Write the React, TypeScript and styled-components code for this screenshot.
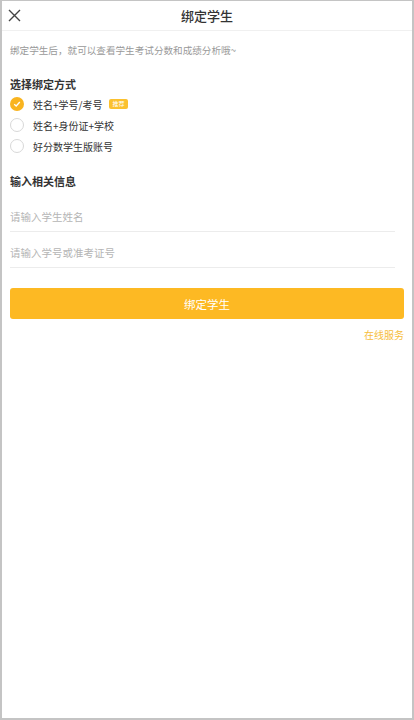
import { useState } from "react"
import styled, { createGlobalStyle } from "styled-components"

const GlobalStyle = createGlobalStyle`
  html, body {
    margin: 0;
    padding: 0;
    background: #fff;
  }
  body {
    font-family: "Noto Sans CJK SC", "Noto Sans", sans-serif;
    color: #333;
  }
`

const Frame = styled.div`
  box-sizing: border-box;
  width: 414px;
  height: 720px;
  border: 2px solid #c4c4c4;
  border-top-width: 1px;
  background: #fff;
  display: flex;
  flex-direction: column;
`

const Header = styled.div`
  height: 29px;
  display: grid;
  grid-template-columns: 40px 1fr 40px;
  align-items: center;
  border-bottom: 1px solid #f0f0f0;
`

const CloseButton = styled.button`
  border: 0;
  background: none;
  padding: 0 0 0 6px;
  height: 100%;
  display: flex;
  align-items: center;
  cursor: pointer;
`

const Title = styled.div`
  text-align: center;
  font-size: 13px;
  font-weight: 500;
  color: #333;
`

const Body = styled.div`
  padding: 0 8px;
  display: flex;
  flex-direction: column;
`

const Hint = styled.p`
  margin: 12px 0 0;
  font-size: 9.6px;
  line-height: 14px;
  color: #999;
`

const SectionTitle = styled.h2<{ $top: number }>`
  margin: ${(p) => p.$top}px 0 0;
  font-size: 11px;
  line-height: 18px;
  font-weight: 700;
  color: #333;
`

const Options = styled.div`
  margin-top: 3px;
  display: flex;
  flex-direction: column;
  gap: 5px;
`

const Option = styled.label`
  height: 16px;
  display: flex;
  align-items: center;
  gap: 9px;
  font-size: 10px;
  color: #333;
  cursor: pointer;
`

const Circle = styled.span<{ $on: boolean }>`
  box-sizing: border-box;
  width: 14px;
  height: 14px;
  border-radius: 50%;
  display: flex;
  align-items: center;
  justify-content: center;
  background: ${(p) => (p.$on ? "#f9b41f" : "#fff")};
  border: ${(p) => (p.$on ? "0" : "1px solid #d8d8d8")};
`

const Tag = styled.span`
  margin-left: -2px;
  padding: 0 3px;
  height: 10px;
  line-height: 10px;
  border-radius: 2px;
  background: #fbc12f;
  color: #fff;
  font-size: 6px;
`

const Field = styled.input`
  box-sizing: border-box;
  width: 385px;
  height: 36px;
  border: 0;
  border-bottom: 1px solid #ececec;
  padding: 5px 0 0;
  font-family: inherit;
  font-size: 10.5px;
  color: #333;
  outline: none;
  &::placeholder {
    color: #b5b5b5;
  }
`

const Fields = styled.div`
  margin-top: 6px;
  display: flex;
  flex-direction: column;
`

const Submit = styled.button`
  margin-top: 20px;
  height: 31px;
  border: 0;
  border-radius: 3px;
  background: #fdb923;
  color: #fff;
  font-family: inherit;
  font-size: 11.5px;
  cursor: pointer;
`

const Service = styled.a`
  align-self: flex-end;
  margin-top: 8px;
  font-size: 10px;
  color: #f6bd3a;
  text-decoration: none;
`

const methods = ["姓名+学号/考号", "姓名+身份证+学校", "好分数学生版账号"]

export default function App() {
  const [method, setMethod] = useState(0)
  return (
    <>
      <GlobalStyle />
      <Frame>
        <Header>
          <CloseButton aria-label="关闭">
            <svg width="13" height="13" viewBox="0 0 13 13">
              <path d="M1 1L12 12M12 1L1 12" stroke="#444" strokeWidth="1.4" />
            </svg>
          </CloseButton>
          <Title>绑定学生</Title>
          <span />
        </Header>
        <Body>
          <Hint>绑定学生后，就可以查看学生考试分数和成绩分析哦~</Hint>
          <SectionTitle $top={18}>选择绑定方式</SectionTitle>
          <Options>
            {methods.map((m, i) => (
              <Option key={m} onClick={() => setMethod(i)}>
                <Circle $on={method === i}>
                  {method === i && (
                    <svg width="8" height="8" viewBox="0 0 8 8">
                      <path d="M1.2 4.2L3.2 6L6.8 2" stroke="#fff" strokeWidth="1.3" fill="none" />
                    </svg>
                  )}
                </Circle>
                {m}
                {i === 0 && <Tag>推荐</Tag>}
              </Option>
            ))}
          </Options>
          <SectionTitle $top={18}>输入相关信息</SectionTitle>
          <Fields>
            <Field placeholder="请输入学生姓名" />
            <Field placeholder="请输入学号或准考证号" />
          </Fields>
          <Submit>绑定学生</Submit>
          <Service href="#">在线服务</Service>
        </Body>
      </Frame>
    </>
  )
}
